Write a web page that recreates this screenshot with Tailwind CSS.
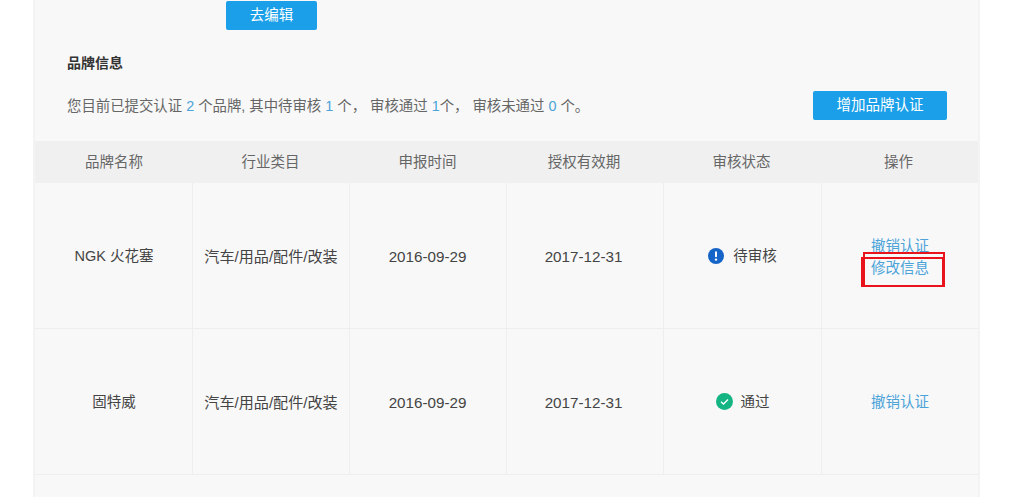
<!DOCTYPE html>
<html lang="zh">
<head>
    <meta charset="UTF-8">
    <title>品牌信息</title>
    <script src="https://cdn.jsdelivr.net/npm/@tailwindcss/browser@4"></script>
</head>
<body class="bg-white h-[497px] overflow-hidden font-['Liberation_Sans','Noto_Sans_CJK_SC',sans-serif] text-[14.5px] text-[#555]">
    <div class="relative ml-[33px] w-[947px] h-[497px] bg-[#f8f8f8] border-x-2 border-[#f3f3f3]">
        <div class="h-[141px]">
            <div class="pl-[191px] pt-px">
                <button class="w-[91px] h-[29px] pt-px bg-[#1a9fe8] rounded-[2px] text-white text-[14.5px]">去编辑</button>
            </div>
            <h3 class="pl-8 mt-[24px] text-[14px] leading-[18px] font-bold text-[#333]">品牌信息</h3>
            <div class="flex items-start justify-between pl-8 pr-[31px] mt-[19px]">
                <p class="pt-px leading-[29px] text-[14.4px] text-[#666]">您目前已提交认证 <span class="text-[#4ba3d8]">2</span> 个品牌, 其中待审核 <span class="text-[#4ba3d8]">1</span> 个， 审核通过 <span class="text-[#4ba3d8]">1</span>个， 审核未通过 <span class="text-[#4ba3d8]">0</span> 个。</p>
                <button class="w-[134px] h-[29px] bg-[#1a9fe8] rounded-[2px] text-white text-[14.5px]">增加品牌认证</button>
            </div>
        </div>

        <div class="grid grid-cols-[158px_157px_157px_157px_158px_156px] h-[42px] pt-px items-center text-center bg-[#f0f0f0] text-[#666]">
            <div>品牌名称</div>
            <div class="pr-[2px]">行业类目</div>
            <div class="pr-[2px]">申报时间</div>
            <div class="pr-[3px]">授权有效期</div>
            <div class="pr-[3px]">审核状态</div>
            <div class="pr-[3px]">操作</div>
        </div>

        <div class="grid grid-cols-[158px_157px_157px_157px_158px_156px] h-[146px] text-center text-[#444] border-b border-[#eeeeee]">
            <div class="flex items-center justify-center pt-[3px] pl-px border-r border-[#eeeeee]">NGK 火花塞</div>
            <div class="flex items-center justify-center pt-[3px] border-r border-[#eeeeee] text-[15.1px] whitespace-nowrap">汽车/用品/配件/改装</div>
            <div class="flex items-center justify-center pt-[3px] pr-px border-r border-[#eeeeee] text-[15.2px]">2016-09-29</div>
            <div class="flex items-center justify-center pt-[3px] pr-[3px] border-r border-[#eeeeee] text-[15.2px]">2017-12-31</div>
            <div class="flex items-center justify-center gap-[9px] border-r border-[#eeeeee]">
                <svg width="16" height="16" viewBox="0 0 16 16"><circle cx="8" cy="8" r="8" fill="#1565c8"/><rect x="7" y="3.2" width="2" height="6" rx="1" fill="#fff"/><circle cx="8" cy="11.6" r="1.2" fill="#fff"/></svg>
                <span class="mt-[2px]">待审核</span>
            </div>
            <div class="flex flex-col items-center justify-center pt-[3px] text-[#4ba3d8] leading-[22px]">
                <a>撤销认证</a>
                <a>修改信息</a>
            </div>
        </div>

        <div class="grid grid-cols-[158px_157px_157px_157px_158px_156px] h-[146px] text-center text-[#444] border-b border-[#eeeeee]">
            <div class="flex items-center justify-center pt-[3px] pl-px border-r border-[#eeeeee]">固特威</div>
            <div class="flex items-center justify-center pt-[3px] border-r border-[#eeeeee] text-[15.1px] whitespace-nowrap">汽车/用品/配件/改装</div>
            <div class="flex items-center justify-center pt-[3px] pr-px border-r border-[#eeeeee] text-[15.2px]">2016-09-29</div>
            <div class="flex items-center justify-center pt-[3px] pr-[3px] border-r border-[#eeeeee] text-[15.2px]">2017-12-31</div>
            <div class="flex items-center justify-center gap-[8px] border-r border-[#eeeeee]">
                <svg width="17" height="17" viewBox="0 0 17 17"><circle cx="8.5" cy="8.5" r="8.5" fill="#14b583"/><path d="M5 8.7l2.5 2.4L12 6.6" fill="none" stroke="#fff" stroke-width="1.4"/></svg>
                <span class="mt-[2px]">通过</span>
            </div>
            <div class="flex items-center justify-center pt-[3px] text-[#4ba3d8]">撤销认证</div>
        </div>

        <!-- red marks drawn over the screenshot -->
        <div class="absolute left-[826px] top-[257px] w-[83px] h-[30px] border-2 border-[#e8131b]"></div>
        <div class="absolute left-[828px] top-[252px] w-[82px] h-[35px] border-2 border-[#e8131b]"></div>
    </div>
</body>
</html>
